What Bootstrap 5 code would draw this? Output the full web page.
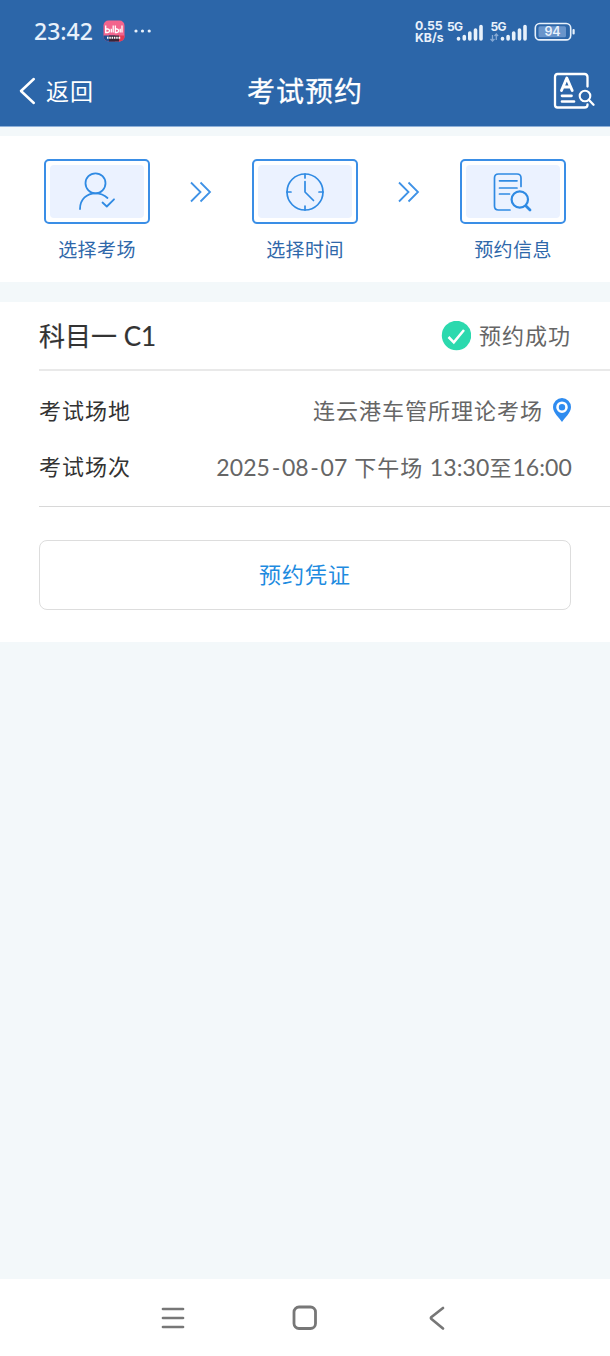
<!DOCTYPE html>
<html lang="zh-CN">
<head>
<meta charset="utf-8">
<meta name="viewport" content="width=device-width, initial-scale=1">
<title>考试预约</title>
<link href="https://cdn.jsdelivr.net/npm/bootstrap@5.3.0/dist/css/bootstrap.min.css" rel="stylesheet">
<style>
  body { font-family: Lato, "Noto Sans CJK SC", sans-serif; background: #f3f8fa; color: #333; line-height: 1; }
  svg { display: block; flex: none; }
  .app-header { background: #2c66a9; height: 127px; border-bottom: 1px solid #8eb0d8; color: #fff; }
  .status-bar { height: 62px; padding: 0 33px 0 34px; color: #e8f1fb; }
  .clock { font-size: 23px; font-weight: 500; font-family: "Noto Sans", sans-serif; width: 59px; }
  .app-tile { margin-left: 10px; }
  .net-speed { font: 700 12.3px/11.5px Inter, sans-serif; width: 31px; margin-right: 1px; white-space: nowrap; padding-top: 1px; }
  .title-bar { height: 58px; padding: 0 15px 0 19px; }
  .back-text { font-size: 23px; letter-spacing: 1px; margin-left: 10px; }
  .page-title { font-size: 28px; letter-spacing: 1px; font-weight: 400; line-height: 40px; margin-right: 4px; -webkit-text-stroke: .3px #fff; }
  .steps { margin-top: 9px; height: 146px; padding: 23px 44px 0; }
  .step-box { width: 106px; height: 65px; border: 2px solid #3a8ee6; border-radius: 5px; padding: 4px; }
  .step-fill { background: #ebf2ff; border-radius: 4px; }
  .step-label { font-size: 19px; letter-spacing: .4px; line-height: 28px; margin-top: 12px; color: #2f68aa; white-space: nowrap; }
  .step-arrow { height: 66px; }
  .booking { margin-top: 20px; height: 340px; padding-left: 39px; }
  .booking-head { height: 69px; border-bottom: 2px solid #e9e9e9; padding-right: 39px; }
  .subject { font-size: 26px; -webkit-text-stroke: .2px #333; }
  .field-text { font-size: 22px; letter-spacing: 1px; white-space: nowrap; }
  .latin { font-size: 23px; letter-spacing: .1px; }
  .dash { padding: 0 1.6px; }
  .muted-text { color: #666; }
  .booking-body { height: 136px; border-bottom: 1px solid #d8d8d8; padding: 12px 38px 0 0; }
  .field-row { height: 56px; }
  .pin { margin: 0 -1px 2px 8px; }
  .voucher { width: calc(100% - 39px); height: 70px; margin-top: 33px; border: 1.5px solid #ddd; border-radius: 8px; color: #1e8be0; font-size: 22px; letter-spacing: 1px; background: #fff; padding: 0; }
  .system-nav { height: 77px; padding: 0 160px; }
</style>
</head>
<body class="d-flex flex-column min-vh-100">
<header class="app-header">
  <div class="status-bar d-flex align-items-center">
    <span class="clock">23:42</span>
    <svg class="app-tile" width="22" height="22" viewBox="0 0 22 22">
      <defs><clipPath id="tile"><rect x=".5" y=".5" width="21" height="21" rx="5"/></clipPath></defs>
      <g clip-path="url(#tile)">
        <rect width="22" height="22" fill="#f3648d"/><rect y="15.500" width="12" height="7" fill="#214f91"/><rect x="6" y="15.500" width="10" height="7" fill="#3a2435"/><rect x="16" y="15.500" width="6" height="7" fill="#e33a54"/>
        <path d="M2.700 5.500v7h2q1.800-.3 1.800-1.800t-1.800-1.700h-2M8.300 8.800v3.700M10.200 5.500v7M12.300 5.500v7h1.500q1.800-.3 1.800-1.800t-1.800-1.700h-1.500M17.200 8.800v3.700M19 5.500v7" fill="none" stroke="#fff" stroke-width="1.300"/>
        <path d="M4 17.800h14" stroke="#fff" stroke-width="2" stroke-dasharray="1.500 .8"/>
      </g>
    </svg>
    <svg class="ms-2" width="20" height="6" viewBox="0 0 20 6" fill="#e8f1fb"><circle cx="3" cy="3" r="1.600"/><circle cx="9.500" cy="3" r="1.600"/><circle cx="16.200" cy="3" r="1.600"/></svg>
    <div class="net-speed ms-auto"><div>0.55</div><div>KB/s</div></div>
    <svg width="130" height="26" viewBox="0 0 130 26" fill="#e8f1fb">
      <g font-family="Inter, sans-serif" font-weight="700" font-size="12">
        <text x="0" y="12.500" textLength="16">5G</text><text x="43.500" y="12.500" textLength="16">5G</text>
      </g>
      <g stroke="#e8f1fb" stroke-width="3.600" stroke-linecap="round">
        <path d="M11.500 20.500v.5M17.300 18.500v2.500M22.800 15v6M28.500 12v9M34 8.500V21M55.500 20.500v.5M61.100 18.500v2.500M66.700 15v6M72.500 12v9M78 8.500V21"/>
      </g>
      <path d="M45.500 17v6M43.500 21l2 2 2-2M49.300 22v-6M47.500 18l1.800-2 1.800 2" fill="none" stroke="#86a9d4" stroke-width="1.300"/>
      <rect x="88.300" y="5.500" width="35.400" height="16.400" rx="4.500" fill="none" stroke="#e8f1fb" stroke-width="1.600"/>
      <rect x="91.500" y="8.300" width="27.500" height="11" rx="1.500" fill="#6995cb"/>
      <rect x="125.500" y="11" width="2.200" height="5.500" rx="1"/>
      <text x="97.500" y="18.300" font-family="Inter, sans-serif" font-weight="600" font-size="12.500" textLength="16">94</text>
    </svg>
  </div>
  <nav class="title-bar d-flex align-items-center">
    <div class="col d-flex align-items-center">
      <svg width="17" height="28" viewBox="0 0 17 28"><path d="M14.800 2 2 14l12.800 12" fill="none" stroke="#fff" stroke-width="2.500" stroke-linecap="round" stroke-linejoin="round"/></svg>
      <span class="back-text">返回</span>
    </div>
    <h1 class="page-title mb-0">考试预约</h1>
    <div class="col d-flex justify-content-end">
      <svg width="42" height="38" viewBox="0 0 42 38" fill="none" stroke="#fff" stroke-width="2.300" stroke-linecap="round" stroke-linejoin="round">
        <path d="M34.500 14.500V5q0-3-3-3h-27Q2 2 2 5v28q0 2.500 2.500 2.500H31.500q3 0 3-2.500v-.5"/>
        <path d="m8.500 18.500 5.300-12.500L19.200 18.500M10.500 15h6.700" stroke-width="2.900"/><path d="M9 23.800h9.500M9 29.500h12" stroke-width="2.700"/>
        <circle cx="32" cy="24" r="5.300" stroke-width="2.100"/><path d="m36 28 4.500 4.700" stroke-width="2.300"/>
      </svg>
    </div>
  </nav>
</header>

<section class="steps bg-white d-flex justify-content-between align-items-start">
  <div class="d-flex flex-column align-items-center">
    <div class="step-box"><div class="step-fill h-100 d-flex justify-content-center align-items-center">
      <svg width="40" height="40" viewBox="0 0 40 40" fill="none" stroke="#2f8ae3" stroke-width="1.800" stroke-linecap="round" stroke-linejoin="round"><circle cx="18.500" cy="11.300" r="10"/><path d="M3 37C3 27 10 21.300 18.500 21.300q7 0 12 4.700M25.500 30.500l4.300 4L37 27.300"/></svg>
    </div></div>
    <span class="step-label">选择考场</span>
  </div>
  <div class="step-arrow d-flex align-items-center"><svg width="22" height="22" viewBox="0 0 22 22" fill="none" stroke="#3f92e6" stroke-width="1.800"><path d="m1 1.500 9.500 9.500L1 20.500M10.500 1.500 20 11l-9.500 9.500"/></svg></div>
  <div class="d-flex flex-column align-items-center">
    <div class="step-box"><div class="step-fill h-100 d-flex justify-content-center align-items-center">
      <svg width="40" height="40" viewBox="0 0 40 40" fill="none" stroke="#2f8ae3" stroke-width="1.700" stroke-linecap="round" stroke-linejoin="round"><circle cx="20" cy="20" r="18"/><path d="M20 2v4M20 34v4M2 20h4M34 20h4M20 9.500V20l8.500 8.500"/></svg>
    </div></div>
    <span class="step-label">选择时间</span>
  </div>
  <div class="step-arrow d-flex align-items-center"><svg width="22" height="22" viewBox="0 0 22 22" fill="none" stroke="#3f92e6" stroke-width="1.800"><path d="m1 1.500 9.500 9.500L1 20.500M10.500 1.500 20 11l-9.500 9.500"/></svg></div>
  <div class="d-flex flex-column align-items-center">
    <div class="step-box"><div class="step-fill h-100 d-flex justify-content-center align-items-center">
      <svg width="40" height="40" viewBox="0 0 40 40" fill="none" stroke="#2f8ae3" stroke-width="1.700" stroke-linecap="round" stroke-linejoin="round"><path d="M28 14.500V6q0-4-4-4H5.500q-4 0-4 4v28q0 4 4 4H17M6.500 8.800H24M6.500 16H24M6.500 22h10"/><circle cx="26.800" cy="27.500" r="8.200" stroke-width="2.200"/><path d="m33 34 4 4" stroke-width="2.800"/></svg>
    </div></div>
    <span class="step-label">预约信息</span>
  </div>
</section>

<main class="booking bg-white">
  <div class="booking-head d-flex justify-content-between align-items-center">
    <span class="subject">科目一 C1</span>
    <span class="d-flex align-items-center muted-text">
      <svg class="me-2" width="30" height="30" viewBox="0 0 30 30"><circle cx="15.500" cy="14.500" r="14.700" fill="#2cd9ae"/><path d="m7.500 16 5.300 5.300L23 9" fill="none" stroke="#fff" stroke-width="2.500"/></svg>
      <span class="field-text">预约成功</span>
    </span>
  </div>
  <div class="booking-body">
    <div class="field-row d-flex justify-content-between align-items-center">
      <span class="field-text">考试场地</span>
      <span class="d-flex align-items-center muted-text">
        <span class="field-text">连云港车管所理论考场</span>
        <svg class="pin" width="22" height="26" viewBox="0 0 22 26"><path d="M11 1a9 9 0 0 0-9 9c0 6 6.500 11 9 15 2.500-4 9-9 9-15a9 9 0 0 0-9-9Z" fill="#2f8cf0"/><circle cx="11" cy="10.200" r="4.500" fill="none" stroke="#fff" stroke-width="2.600"/></svg>
      </span>
    </div>
    <div class="field-row d-flex justify-content-between align-items-center">
      <span class="field-text">考试场次</span>
      <span class="field-text muted-text"><span class="latin">2025<span class="dash">-</span>08<span class="dash">-</span>07</span> 下午场 <span class="latin">13:30</span>至<span class="latin">16:00</span></span>
    </div>
  </div>
  <button class="voucher d-block text-center" type="button">预约凭证</button>
</main>

<footer class="system-nav bg-white d-flex justify-content-between align-items-center mt-auto">
  <svg width="26" height="26" viewBox="0 0 26 26" stroke="#777" stroke-width="2.700" stroke-linecap="round"><path d="M3 4h20M3 13h20M3 22h20"/></svg>
  <svg width="26" height="26" viewBox="0 0 26 26" fill="none" stroke="#777" stroke-width="2.800"><rect x="2" y="2" width="21.500" height="21.500" rx="5"/></svg>
  <svg width="26" height="26" viewBox="0 0 26 26" fill="none" stroke="#777" stroke-width="2.700" stroke-linecap="round" stroke-linejoin="round"><path d="M19 3 7.500 12q-1 1 0 2L19 23.500"/></svg>
</footer>
<script src="https://cdn.jsdelivr.net/npm/bootstrap@5.3.0/dist/js/bootstrap.bundle.min.js"></script>
</body>
</html>
